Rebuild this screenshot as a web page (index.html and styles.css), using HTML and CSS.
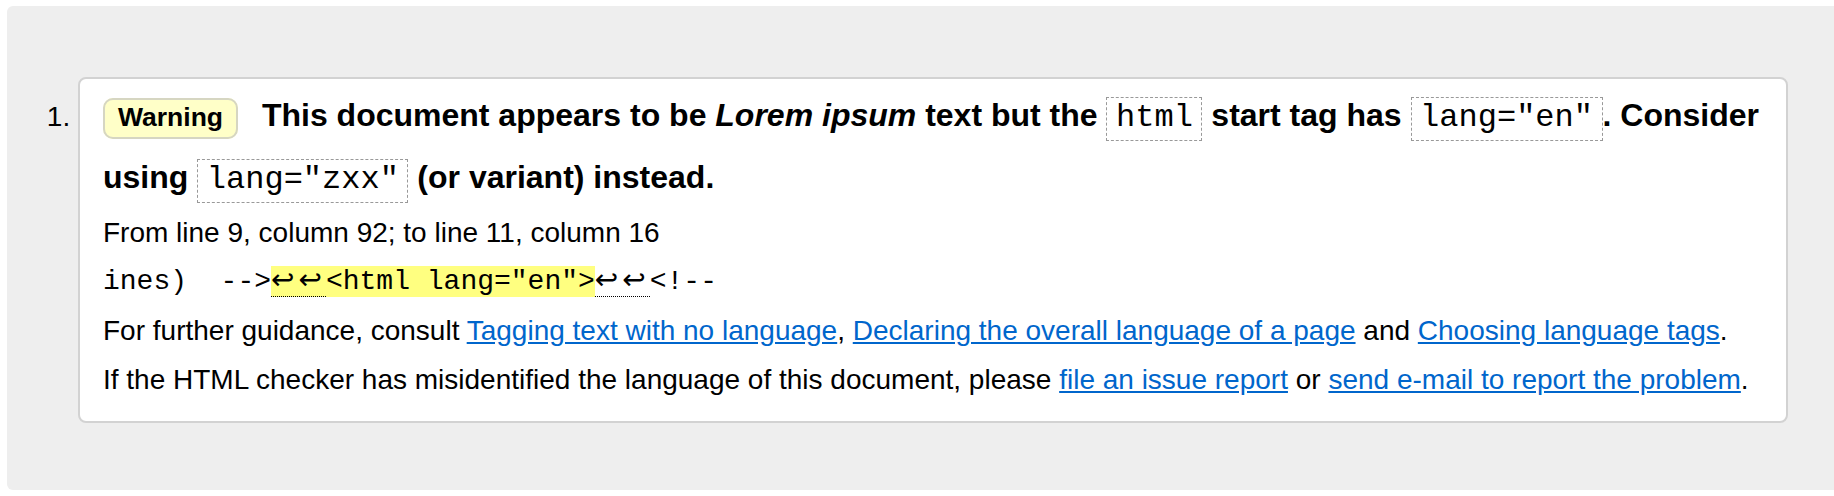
FILE: index.html
```html
<!DOCTYPE html>
<html lang="en">
<head>
<meta charset="utf-8">
<title>Message</title>
<link rel="stylesheet" href="styles.css">
</head>
<body>
<div class="panel">
<ol class="messages">
<li class="msg">
<p class="msg-head"><strong class="badge">Warning</strong> This document appears to be <em>Lorem ipsum</em> text but the <code class="tok">html</code> start tag has <code class="tok">lang="en"</code>. Consider using <code class="tok">lang="zxx"</code> (or variant) instead.</p>
<p class="loc">From line 9, column 92; to line 11, column 16</p>
<p class="extract"><code>ines)  --&gt;<mark class="hl"><span class="lf">↩↩</span>&lt;html lang="en"&gt;</mark><span class="lf">↩↩</span>&lt;!--</code></p>
<p class="note">For further guidance, consult <a href="#">Tagging text with no language</a>, <a href="#">Declaring the overall language of a page</a> and <a href="#">Choosing language tags</a>.</p>
<p class="note">If the HTML checker has misidentified the language of this document, please <a href="#">file an issue report</a> or <a href="#">send e-mail to report the problem</a>.</p>
</li>
</ol>
</div>
</body>
</html>
```

FILE: styles.css
```css
html, body {
  margin: 0;
  padding: 0;
  background: #fff;
}

body {
  font-family: "Liberation Sans", Arial, Helvetica, sans-serif;
  font-size: 28px;
  color: #000;
  overflow: hidden;
}

.panel {
  margin: 6px 0 0 7px;
  background: #eeeeee;
  border-radius: 6px 0 0 6px;
  padding: 71px 46px 67px 0;
}

.messages {
  margin: 0;
  padding: 0 0 0 71px;
  list-style: decimal outside;
}

.msg {
  background: #fff;
  border: 2px solid #d2d2d2;
  border-radius: 8px;
  padding: 6px 23px 17px;
}

.msg p {
  margin: 0;
}

.msg-head {
  font-size: 32px;
  font-weight: bold;
  line-height: 61.6px;
}

.badge {
  font-size: 26.5px;
  line-height: 1;
  background: #ffffc8;
  border: 2px solid #d6d6c2;
  border-radius: 10px;
  padding: 2px 13px 5px;
  margin-right: 15px;
}

.tok {
  font-family: "Liberation Mono", "Courier New", monospace;
  font-weight: normal;
  font-size: 32px;
  line-height: 1;
  border: 1px dashed #999;
  padding: 1px 8.6px 4px;
}

.loc,
.note {
  line-height: 49px;
}

.extract {
  font-family: "Liberation Mono", "Courier New", monospace;
  line-height: 49px;
  white-space: pre;
}

.extract code {
  font-family: inherit;
  font-size: 28px;
}

.hl {
  background: #ffff80;
  color: inherit;
}

.lf {
  font-family: "DejaVu Sans", sans-serif;
  letter-spacing: 4px;
  border-bottom: 1px dotted #000;
  line-height: 1;
}

a {
  color: #0066cc;
}
```
